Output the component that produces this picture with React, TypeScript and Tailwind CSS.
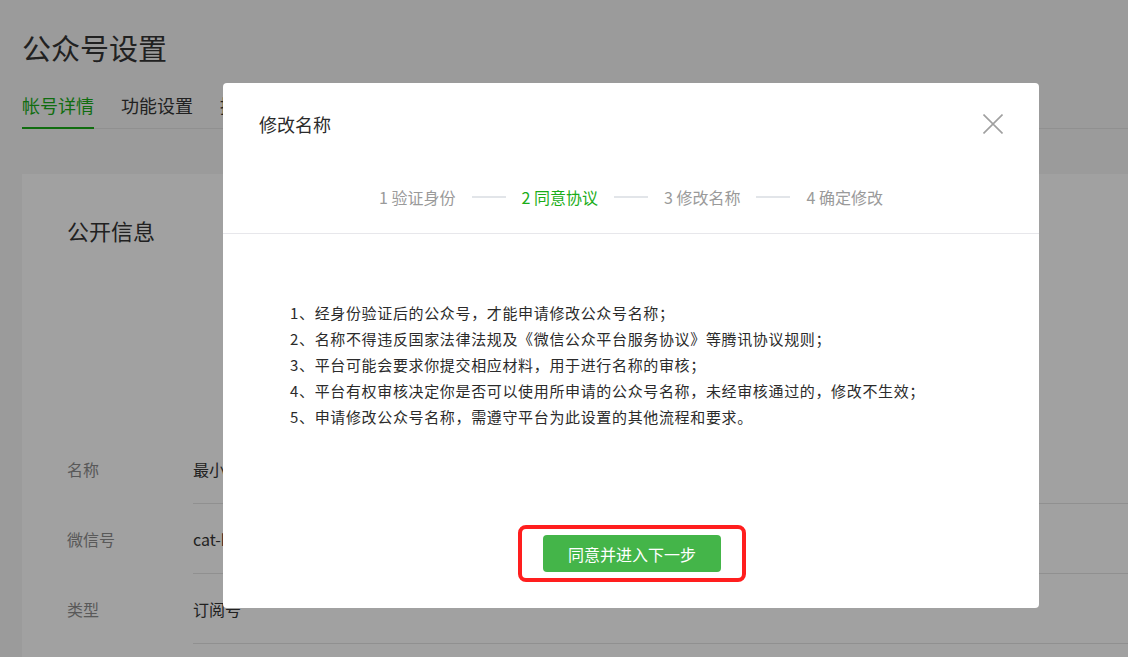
const rules = [
    '1、经身份验证后的公众号，才能申请修改公众号名称；',
    '2、名称不得违反国家法律法规及《微信公众平台服务协议》等腾讯协议规则；',
    '3、平台可能会要求你提交相应材料，用于进行名称的审核；',
    '4、平台有权审核决定你是否可以使用所申请的公众号名称，未经审核通过的，修改不生效；',
    '5、申请修改公众号名称，需遵守平台为此设置的其他流程和要求。',
]

const steps = ['1 验证身份', '2 同意协议', '3 修改名称', '4 确定修改']

const infoRows = [
    { label: '名称', value: '最小可爱喵的小窝' },
    { label: '微信号', value: 'cat-house-2020' },
    { label: '类型', value: '订阅号' },
]

function SettingsPage() {
    return (
        <div className="flex h-full flex-col pl-[22px]">
            <h1 className="mt-[27px] text-[29px] leading-[40px] text-[#353535]">公众号设置</h1>
            <div className="mt-[26px] flex gap-[27px] border-b border-[#e4e4e4] text-[18px] leading-[24px]">
                <div className="-mb-px border-b-2 border-[#1aad19] pb-[10px] text-[#1aad19]">帐号详情</div>
                <div className="pb-[10px] text-[#353535]">功能设置</div>
                <div className="pb-[10px] text-[#353535]">授权管理</div>
            </div>
            <div className="mt-[45px] flex-1 bg-white pl-[45px]">
                <h2 className="pt-[41px] text-[22px] leading-[30px] text-[#353535]">公开信息</h2>
                <div className="mt-[189px] flex flex-col">
                    {infoRows.map((row) => (
                        <div key={row.label} className="flex h-[70px]">
                            <div className="flex w-[126px] items-center text-[16px] text-[#8d8d8d]">{row.label}</div>
                            <div className="flex flex-1 items-center border-b border-[#e4e4e4] text-[16px] text-[#353535]">
                                {row.value}
                            </div>
                        </div>
                    ))}
                </div>
            </div>
        </div>
    )
}

function CloseIcon() {
    return (
        <svg width="20" height="20" viewBox="0 0 20 20" className="text-[#a0a0a0]">
            <path d="M0.5 0.5 L19.5 19.5 M19.5 0.5 L0.5 19.5" stroke="currentColor" strokeWidth="1.6" />
        </svg>
    )
}

function RenameDialog() {
    return (
        <div className="absolute left-[223px] top-[83px] flex h-[525px] w-[816px] flex-col rounded-[4px] bg-white">
            <div className="h-[151px] border-b border-[#e7e7eb]">
                <div className="flex items-center justify-between pl-[36px] pr-[36px] pt-[29px]">
                    <span className="text-[18px] leading-[24px] text-[#2b2b2b]">修改名称</span>
                    <CloseIcon />
                </div>
                <div className="mt-[49px] flex items-center justify-center text-[16px] leading-[24px]">
                    {steps.map((step, i) => (
                        <div key={step} className="flex items-center">
                            {i > 0 && <span className="mx-[16px] h-[2px] w-[34px] bg-[#e2e5e9]" />}
                            <span className={i === 1 ? 'text-[#1aad19]' : 'text-[#9a9a9a]'}>{step}</span>
                        </div>
                    ))}
                </div>
            </div>
            <ul className="pl-[67px] pt-[66px] text-[15px] leading-[26px] tracking-[0.65px] text-[#2b2b2b]">
                {rules.map((rule) => (
                    <li key={rule}>{rule}</li>
                ))}
            </ul>
            <div className="mt-auto flex justify-center pb-[26px]">
                <div className="ml-[2px] rounded-[8px] border-4 border-[#ff1e1e] px-[21px] py-[6px]">
                    <button className="h-[37px] w-[178px] rounded-[4px] bg-[#44b549] text-[16px] text-white">
                        同意并进入下一步
                    </button>
                </div>
            </div>
        </div>
    )
}

export default function App() {
    return (
        <div className="relative h-[657px] w-[1128px] overflow-hidden bg-[#f5f6f5] font-['Noto_Sans_CJK_SC','Noto_Sans',sans-serif]">
            <SettingsPage />
            <div className="absolute inset-0 bg-black/[0.37]" />
            <RenameDialog />
        </div>
    )
}
